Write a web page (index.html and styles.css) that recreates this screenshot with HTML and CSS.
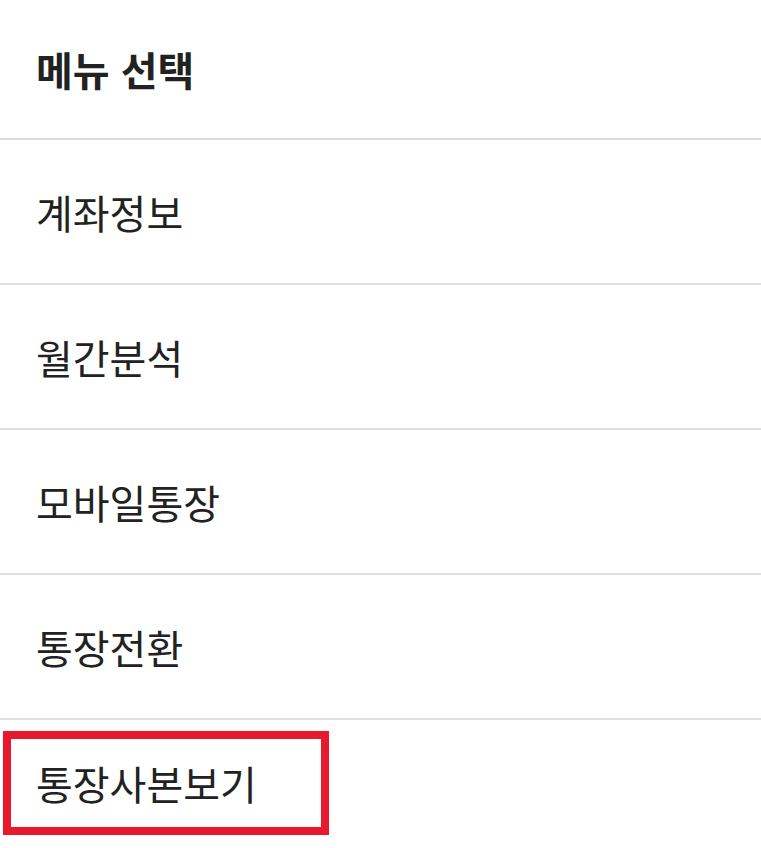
FILE: index.html
```html
<!DOCTYPE html>
<html lang="ko">
    <head>
        <meta charset="utf-8">
        <title>메뉴 선택</title>
        <link rel="stylesheet" href="styles.css">
    </head>
    <body>
        <header class="menuHeader">메뉴 선택</header>
        <ul class="menuList">
            <li class="menuItem">계좌정보</li>
            <li class="menuItem">월간분석</li>
            <li class="menuItem">모바일통장</li>
            <li class="menuItem">통장전환</li>
            <li class="menuItem last"><span class="highlight">통장사본보기</span></li>
        </ul>
    </body>
</html>
```

FILE: styles.css
```css
body {
    margin: 0;
    background-color: #ffffff;
    color: #222222;
    font-family: "Noto Sans CJK KR", "Noto Sans", sans-serif;
    overflow: hidden;
}

/* Title row */
.menuHeader {
    height: 138px;
    padding-left: 36px;
    display: flex;
    align-items: center;
    font-size: 40px;
    font-weight: bold;
    border-bottom: 2px solid #dcdcdc;
}

.menuList {
    list-style: none;
    margin: 0;
    padding: 0;
}

.menuItem {
    height: 143px;
    padding-left: 36px;
    display: flex;
    align-items: center;
    font-size: 40px;
    border-bottom: 2px solid #e0e0e0;
}

.menuItem.last {
    border-bottom: none;
    height: 126px;
}

/* red marker box round the last entry */
.highlight {
    display: inline-block;
    margin-left: -33px;
    padding: 18px 64px 18px 25px;
    border: 8px solid #e8192c;
    line-height: 52px;
}
```
